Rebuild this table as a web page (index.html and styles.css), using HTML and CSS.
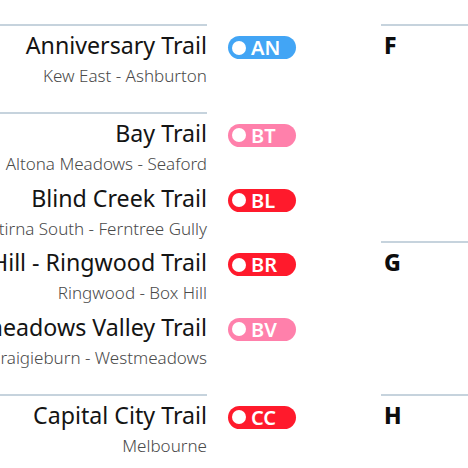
FILE: index.html
```html
<!DOCTYPE html>
<html lang="en">
<head>
<meta charset="utf-8">
<title>Melbourne Trails</title>
<link rel="stylesheet" href="styles.css">
</head>
<body>
<main class="columns">
  <div class="column">
    <section class="group">
      <div class="rule"></div>
      <div class="group-body">
        <h2 class="letter">A</h2>
        <ul class="items">
          <li class="item">
            <div class="trail-text"><span class="trail-name">Anniversary Trail</span><span class="trail-route">Kew East - Ashburton</span></div>
            <span class="badge badge-blue"><span class="dot"></span>AN</span>
          </li>
        </ul>
      </div>
    </section>
    <section class="group">
      <div class="rule"></div>
      <div class="group-body">
        <h2 class="letter">B</h2>
        <ul class="items">
          <li class="item">
            <div class="trail-text"><span class="trail-name">Bay Trail</span><span class="trail-route">Altona Meadows - Seaford</span></div>
            <span class="badge badge-pink"><span class="dot"></span>BT</span>
          </li>
          <li class="item">
            <div class="trail-text"><span class="trail-name">Blind Creek Trail</span><span class="trail-route">Wantirna South - Ferntree Gully</span></div>
            <span class="badge badge-red"><span class="dot"></span>BL</span>
          </li>
          <li class="item">
            <div class="trail-text"><span class="trail-name">Box Hill - Ringwood Trail</span><span class="trail-route">Ringwood - Box Hill</span></div>
            <span class="badge badge-red"><span class="dot"></span>BR</span>
          </li>
          <li class="item">
            <div class="trail-text"><span class="trail-name">Broadmeadows Valley Trail</span><span class="trail-route">Craigieburn - Westmeadows</span></div>
            <span class="badge badge-pink"><span class="dot"></span>BV</span>
          </li>
        </ul>
      </div>
    </section>
    <section class="group">
      <div class="rule"></div>
      <div class="group-body">
        <h2 class="letter">C</h2>
        <ul class="items">
          <li class="item">
            <div class="trail-text"><span class="trail-name">Capital City Trail</span><span class="trail-route">Melbourne</span></div>
            <span class="badge badge-red"><span class="dot"></span>CC</span>
          </li>
        </ul>
      </div>
    </section>
  </div>

  <div class="column">
    <section class="group">
      <div class="rule"></div>
      <div class="group-body">
        <h2 class="letter">F</h2>
        <ul class="items">
          <li class="item">
            <div class="trail-text"><span class="trail-name">Federation Trail</span><span class="trail-route">Altona North - Werribee</span></div>
            <span class="badge badge-red"><span class="dot"></span>FT</span>
          </li>
          <li class="item">
            <div class="trail-text"><span class="trail-name">Ferny Creek Trail</span><span class="trail-route">Ferntree Gully - Boronia</span></div>
            <span class="badge badge-pink"><span class="dot"></span>FC</span>
          </li>
          <li class="item">
            <div class="trail-text"><span class="trail-name">Frankston Freeway Trail</span><span class="trail-route">Frankston - Carrum Downs</span></div>
            <span class="badge badge-blue"><span class="dot"></span>FF</span>
          </li>
        </ul>
      </div>
    </section>
    <section class="group">
      <div class="rule"></div>
      <div class="group-body">
        <h2 class="letter">G</h2>
        <ul class="items">
          <li class="item">
            <div class="trail-text"><span class="trail-name">Gardiners Creek Trail</span><span class="trail-route">Kooyong - Box Hill South</span></div>
            <span class="badge badge-red"><span class="dot"></span>GC</span>
          </li>
          <li class="item">
            <div class="trail-text"><span class="trail-name">Greensborough Bypass Trail</span><span class="trail-route">Greensborough - Bundoora</span></div>
            <span class="badge badge-pink"><span class="dot"></span>GB</span>
          </li>
        </ul>
      </div>
    </section>
    <section class="group">
      <div class="rule"></div>
      <div class="group-body">
        <h2 class="letter">H</h2>
        <ul class="items">
          <li class="item">
            <div class="trail-text"><span class="trail-name">Hobsons Bay Coastal Trail</span><span class="trail-route">Williamstown - Altona</span></div>
            <span class="badge badge-blue"><span class="dot"></span>HB</span>
          </li>
        </ul>
      </div>
    </section>
  </div>
</main>
</body>
</html>
```
FILE: styles.css
```css
html, body {
  margin: 0;
  padding: 0;
  overflow: hidden;
  background: #ffffff;
}

body {
  font-family: "Noto Sans", "Open Sans", sans-serif;
  color: #141414;
}

.columns {
  display: flex;
  gap: 85px;
  margin-left: -213px;
  padding-top: 24px;
}

.column {
  width: 509px;
  flex: none;
  display: flex;
  flex-direction: column;
}

.group {
  padding-bottom: 17.33px;
}

.rule {
  width: calc(100% - 89px);
  height: 2px;
  background: #c6d3dd;
}

.group-body {
  display: flex;
  align-items: baseline;
  padding-top: 4px;
}

.letter {
  margin: 0;
  width: 40px;
  flex: none;
  padding-left: 3px;
  box-sizing: border-box;
  font-size: 23px;
  font-weight: 800;
  line-height: 31px;
  color: #0d0d0d;
}

.items {
  list-style: none;
  margin: 0;
  padding: 0;
  flex: 1;
  min-width: 0;
}

.item {
  display: flex;
  align-items: flex-start;
  margin-bottom: 5.67px;
}

.trail-text {
  flex: 1;
  min-width: 0;
  display: flex;
  flex-direction: column;
  align-items: flex-end;
  white-space: nowrap;
}

.trail-name {
  font-size: 23.2px;
  font-weight: 400;
  line-height: 31px;
  color: #141414;
}

.trail-route {
  margin-top: 2px;
  font-size: 17px;
  font-weight: 300;
  line-height: 26px;
  color: #4a4a4a;
}

.badge {
  flex: none;
  box-sizing: border-box;
  width: 68px;
  height: 23px;
  margin-top: 6px;
  margin-left: 21px;
  border-radius: 12px;
  padding-left: 4px;
  display: flex;
  align-items: center;
  gap: 5px;
  color: #ffffff;
  font-size: 20px;
  font-weight: 600;
  line-height: 23px;
}

.dot {
  width: 14px;
  height: 14px;
  border-radius: 50%;
  background: #ffffff;
  flex: none;
}

.badge-blue { background: #42a5f5; }
.badge-pink { background: #ff80ab; }
.badge-red { background: #ff1a2c; }
```
